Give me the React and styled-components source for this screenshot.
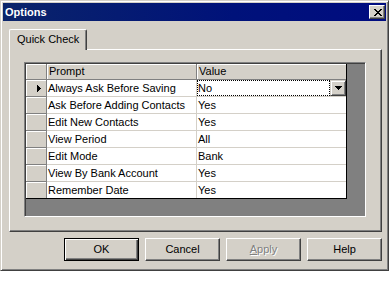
import React from "react";
import styled, { createGlobalStyle } from "styled-components";

const GlobalStyle = createGlobalStyle`
  html, body { margin: 0; padding: 0; background: #fff; }
  body {
    font-family: "Liberation Sans", Arial, sans-serif;
    font-size: 11px;
    color: #000;
  }
`;

const Dialog = styled.div`
  width: 389px;
  height: 271px;
  box-sizing: border-box;
  background: #d4d0c8;
  border: 1px solid;
  border-color: #d4d0c8 #404040 #404040 #d4d0c8;
  box-shadow: inset 1px 1px #fff, inset -1px -1px #808080;
  padding: 2px;
  display: flex;
  flex-direction: column;
`;

const TitleBar = styled.div`
  height: 18px;
  display: flex;
  align-items: center;
  justify-content: space-between;
  padding: 0 1px 0 2px;
  background: linear-gradient(90deg, #0a246a 0%, #00127a 60%, #000c80 100%);
`;

const Title = styled.span`
  color: #fff;
  font-weight: bold;
  font-size: 11px;
  line-height: 18px;
`;

const CloseBox = styled.div`
  width: 16px;
  height: 14px;
  box-sizing: border-box;
  background: #d4d0c8;
  border: 1px solid;
  border-color: #fff #404040 #404040 #fff;
  box-shadow: inset -1px -1px #808080;
  display: flex;
  align-items: center;
  justify-content: center;
  padding-left: 1px;
`;

const Content = styled.div`
  flex: 1;
  display: flex;
  flex-direction: column;
  padding: 8px 4px 0 6px;
`;

const TabStrip = styled.div`
  height: 20px;
  display: flex;
  position: relative;
  z-index: 1;
`;

const Tab = styled.div`
  width: 78px;
  height: 21px;
  box-sizing: border-box;
  background: #d4d0c8;
  border: 1px solid;
  border-bottom: none;
  border-color: #fff #404040 #404040 #fff;
  border-top-left-radius: 2px;
  border-top-right-radius: 2px;
  box-shadow: inset -1px 0 #808080;
  padding: 3px 0 0 7px;
  line-height: 13px;
  white-space: nowrap;
`;

const Panel = styled.div`
  width: 373px;
  height: 183px;
  box-sizing: border-box;
  border: 1px solid;
  border-color: #fff #404040 #404040 #fff;
  box-shadow: inset -1px -1px #808080;
  padding: 12px 0 0 14px;
`;

const GridBox = styled.div`
  width: 342px;
  height: 155px;
  box-sizing: border-box;
  background: #808080;
  border: 1px solid;
  border-color: #808080 #fff #fff #808080;
  box-shadow: inset 1px 1px #404040;
  padding: 1px;
`;

const Table = styled.div`
  width: 321px;
  box-sizing: border-box;
  display: grid;
  grid-template-columns: 21px 150px 149px;
  border-right: 1px solid #000;
  border-bottom: 1px solid #000;
`;

const RowHead = styled.div`
  box-sizing: border-box;
  height: ${(p) => (p.$header || p.$last ? 16 : 17)}px;
  background: #d4d0c8;
  border-right: 1px solid #808080;
  border-bottom: ${(p) => (p.$last ? "none" : "1px solid #808080")};
  box-shadow: inset 1px 1px #fff;
  display: flex;
  align-items: center;
  padding-left: 11px;
`;

const HeadCell = styled.div`
  box-sizing: border-box;
  height: 16px;
  background: #d4d0c8;
  border-right: ${(p) => (p.$end ? "none" : "1px solid #808080")};
  border-bottom: 1px solid #808080;
  box-shadow: inset 1px 1px #fff;
  padding-left: 2px;
  line-height: 15px;
  white-space: nowrap;
`;

const Cell = styled.div`
  box-sizing: border-box;
  height: ${(p) => (p.$last ? 16 : 17)}px;
  background: #fff;
  border-right: ${(p) => (p.$end ? "none" : "1px solid #d4d0c8")};
  border-bottom: ${(p) => (p.$last ? "none" : "1px solid #d4d0c8")};
  padding-left: 1px;
  line-height: 16px;
  white-space: nowrap;
  overflow: hidden;
`;

const EditCell = styled.div`
  box-sizing: border-box;
  height: 17px;
  background: #fff;
  border-bottom: 1px solid #d4d0c8;
  display: flex;
`;

const FocusBox = styled.div`
  flex: 1;
  box-sizing: border-box;
  border: 1px dotted #000;
  line-height: 14px;
  padding-left: 0;
`;

const DropButton = styled.div`
  width: 16px;
  height: 16px;
  box-sizing: border-box;
  background: #d4d0c8;
  border: 1px solid;
  border-color: #d4d0c8 #404040 #404040 #d4d0c8;
  box-shadow: inset 1px 1px #fff, inset -1px -1px #808080;
  display: flex;
  align-items: center;
  justify-content: center;
`;

const ButtonRow = styled.div`
  display: flex;
  justify-content: flex-end;
  gap: 6px;
  margin-top: 6px;
  width: 373px;
`;

const Button = styled.div`
  width: 75px;
  height: 23px;
  box-sizing: border-box;
  background: #d4d0c8;
  border: 1px solid;
  border-color: ${(p) => (p.$default ? "#000" : "#fff #404040 #404040 #fff")};
  box-shadow: ${(p) =>
    p.$default
      ? "inset 1px 1px #fff, inset -1px -1px #404040, inset -2px -2px #808080"
      : "inset -1px -1px #808080"};
  display: flex;
  align-items: center;
  justify-content: center;
  color: ${(p) => (p.$disabled ? "#808080" : "#000")};
  text-shadow: ${(p) => (p.$disabled ? "1px 1px #fff" : "none")};
  padding-bottom: 1px;
`;

const rows = [
  ["Always Ask Before Saving", "No"],
  ["Ask Before Adding Contacts", "Yes"],
  ["Edit New Contacts", "Yes"],
  ["View Period", "All"],
  ["Edit Mode", "Bank"],
  ["View By Bank Account", "Yes"],
  ["Remember Date", "Yes"],
];

const CloseX = () => (
  <svg width="8" height="7" viewBox="0 0 8 7" shapeRendering="crispEdges">
    <path
      fill="#000"
      d="M0 0h2v1H0z M6 0h2v1H6z M1 1h2v1H1z M5 1h2v1H5z M2 2h4v1H2z M3 3h2v1H3z M2 4h4v1H2z M1 5h2v1H1z M5 5h2v1H5z M0 6h2v1H0z M6 6h2v1H6z"
    />
  </svg>
);

const RowArrow = () => (
  <svg width="4" height="7" viewBox="0 0 4 7" shapeRendering="crispEdges">
    <path fill="#000" d="M0 0h1v7H0z M1 1h1v5H1z M2 2h1v3H2z M3 3h1v1H3z" />
  </svg>
);

const DownArrow = () => (
  <svg width="7" height="4" viewBox="0 0 7 4" shapeRendering="crispEdges">
    <path fill="#000" d="M0 0h7v1H0z M1 1h5v1H1z M2 2h3v1H2z M3 3h1v1H3z" />
  </svg>
);

export default function App() {
  return (
    <>
      <GlobalStyle />
      <Dialog>
        <TitleBar>
          <Title>Options</Title>
          <CloseBox>
            <CloseX />
          </CloseBox>
        </TitleBar>
        <Content>
          <TabStrip>
            <Tab>Quick Check</Tab>
          </TabStrip>
          <Panel>
            <GridBox>
              <Table>
                <RowHead $header />
                <HeadCell>Prompt</HeadCell>
                <HeadCell $end>Value</HeadCell>
                {rows.map(([prompt, value], i) => {
                  const last = i === rows.length - 1;
                  return (
                    <React.Fragment key={prompt}>
                      <RowHead $last={last}>{i === 0 ? <RowArrow /> : null}</RowHead>
                      <Cell $last={last}>{prompt}</Cell>
                      {i === 0 ? (
                        <EditCell>
                          <FocusBox>{value}</FocusBox>
                          <DropButton>
                            <DownArrow />
                          </DropButton>
                        </EditCell>
                      ) : (
                        <Cell $last={last} $end>
                          {value}
                        </Cell>
                      )}
                    </React.Fragment>
                  );
                })}
              </Table>
            </GridBox>
          </Panel>
          <ButtonRow>
            <Button $default>OK</Button>
            <Button>Cancel</Button>
            <Button $disabled>
              <span>
                <u>A</u>pply
              </span>
            </Button>
            <Button>Help</Button>
          </ButtonRow>
        </Content>
      </Dialog>
    </>
  );
}
